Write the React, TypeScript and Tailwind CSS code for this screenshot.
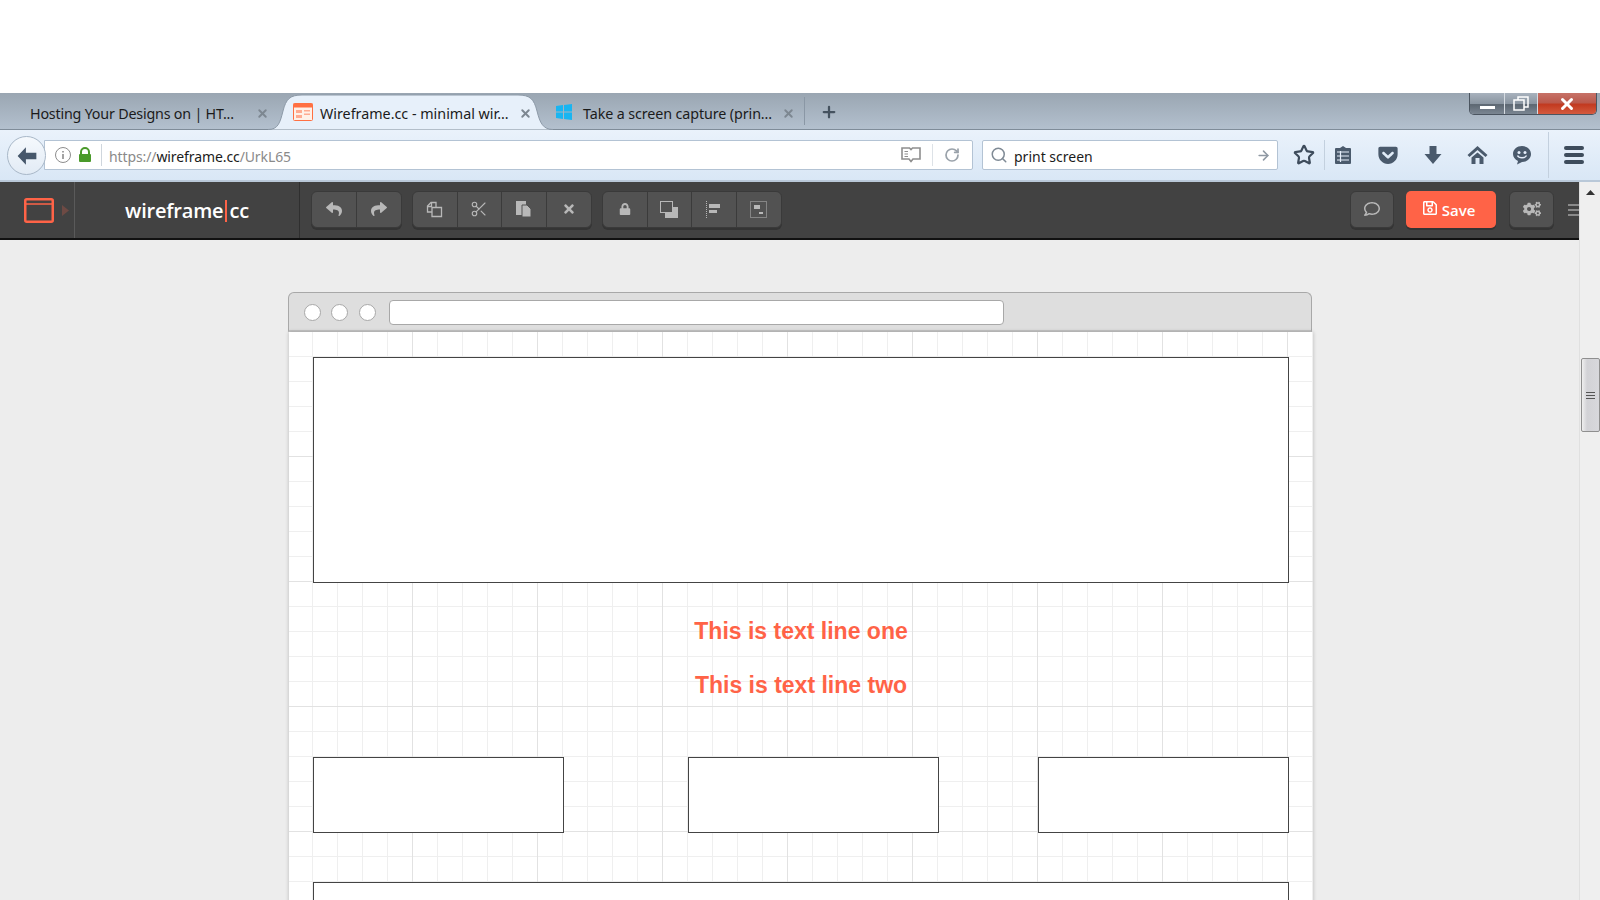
import React from "react";
import { FaReply, FaShare, FaTimes, FaLock, FaCogs, FaRegComment, FaRegSave, FaGetPocket } from "react-icons/fa";
import { Scissors, Star, RotateCw, ArrowRight, Search, Plus, X } from "lucide-react";

const Sep = ({ className = "" }: { className?: string }) => <div className={`w-px h-[30px] bg-[#c3d0de] ${className}`} />;

const TabX = () => <X size={13} strokeWidth={3.5} className="text-[#7d8791]" />;

function Tab({ title, icon, active, className, textClass }: { title: string; icon?: React.ReactNode; active?: boolean; className: string; textClass: string }) {
  return (
    <div className={`relative flex items-center h-full shrink-0 ${active ? "z-10" : ""} ${className}`}>
      {active && (
        <svg className="absolute -left-[13px] -right-[7px] top-0 -bottom-px w-[285px] h-[37px]" viewBox="0 0 285 37" preserveAspectRatio="none">
          <path d="M0 36.5 C10 36.5 12 30 15 18 C18 6 22 2 34 2 L250 2 C262 2 266 6 269 18 C272 30 275 36.5 285 36.5" fill="#e7f0fa" stroke="#8d9aa8" strokeWidth="1" />
        </svg>
      )}
      <div className="relative flex items-center w-full pt-[3px]">
        {icon}
        <span className={`text-[14.3px] pt-[4px] text-[#1b1b1b] whitespace-nowrap leading-none ${textClass}`}>{title}</span>
      </div>
    </div>
  );
}

function Btn({ children, last }: { children: React.ReactNode; last?: boolean }) {
  return <div className={`w-[44.5px] h-full flex items-center justify-center text-[#b8b8b8] ${last ? "" : "border-r border-[#3b3b3b]"}`}>{children}</div>;
}

function Group({ children, className = "" }: { children: React.ReactNode; className?: string }) {
  return <div className={`flex h-[37px] -mt-[2px] rounded-[6px] bg-[#525252] border border-[#3a3a3a] shadow-[0_2px_0_#343434] ${className}`}>{children}</div>;
}

function Box({ className }: { className: string }) {
  return <div className={`border border-[#444444] bg-white shrink-0 ${className}`} />;
}

export default function App() {
  return (
    <div className="w-[1600px] h-[900px] overflow-hidden flex flex-col bg-white font-['Noto_Sans','Open_Sans',sans-serif]">
      <div className="h-[93px] shrink-0 bg-white" />

      {/* tab strip */}
      <div className="relative h-[37px] shrink-0 flex items-center bg-[linear-gradient(180deg,#9aa6b2,#b3c0ce)] border-b border-[#7f8c99]">
        <Tab title="Hosting Your Designs on | HT..." textClass="tracking-[-0.2px]" className="w-[281px] pl-[30px]" />
        <div className="absolute left-[256px] top-[14px]"><TabX /></div>
        <Tab
          active
          title="Wireframe.cc - minimal wir..."
          textClass=""
          className="w-[265px] pl-[12px]"
          icon={
            <svg width="20" height="18" viewBox="0 0 20 18" className="mr-[7px] shrink-0">
              <rect x="0.5" y="0.5" width="19" height="17" rx="1" fill="#fff1e8" stroke="#ff7043" />
              <rect x="0.5" y="0.5" width="19" height="4" fill="#ff7043" />
              <rect x="3" y="7" width="6" height="3" fill="#ffab91" />
              <rect x="3" y="12" width="6" height="3" fill="#ffab91" />
              <rect x="11" y="7" width="6" height="1.5" fill="#ffab91" />
              <rect x="11" y="10.5" width="6" height="1.5" fill="#ffab91" />
            </svg>
          }
        />
        <div className="absolute left-[519px] top-[14px] z-10"><TabX /></div>
        <Tab
          title="Take a screen capture (prin..."
          textClass="tracking-[-0.1px]"
          className="w-[258px] pl-[10px]"
          icon={
            <svg width="16" height="16" viewBox="0 0 16 16" className="mr-[11px] shrink-0">
              <path d="M0 2 L7 1 V7.5 H0 Z M8 1 L16 0 V7.5 H8 Z M0 8.5 H7 V15 L0 14 Z M8 8.5 H16 V16 L8 15 Z" fill="#19b5f1" />
            </svg>
          }
        />
        <div className="absolute left-[782px] top-[14px]"><TabX /></div>
        <div className="w-px h-[28px] bg-[#8a97a5]" />
        <Plus size={18} strokeWidth={3} className="ml-[15px] mt-[2px] text-[#45525f]" />
        <div className="absolute right-[3px] top-0 h-[22px] w-[128px] flex rounded-b-[5px] border border-t-0 border-[#4b5560] overflow-hidden">
          <div className="w-[35px] flex items-center justify-center bg-[linear-gradient(180deg,#a8b2bd_0%,#8b96a2_50%,#5d6772_55%,#7b8692_100%)] border-r border-[#d5dbe1]">
            <div className="w-[15px] h-[3px] bg-white mt-[8px]" />
          </div>
          <div className="w-[33px] flex items-center justify-center bg-[linear-gradient(180deg,#a8b2bd_0%,#8b96a2_50%,#5d6772_55%,#7b8692_100%)] border-r border-[#d5dbe1]">
            <svg width="16" height="15" viewBox="0 0 16 15" fill="none" stroke="#fff" strokeWidth="1.5">
              <rect x="1" y="4" width="10" height="10" />
              <path d="M5 4 V1 H15 V11 H11" />
            </svg>
          </div>
          <div className="flex-1 flex items-center justify-center bg-[linear-gradient(180deg,#c77268_0%,#bb5a4d_45%,#c23a20_55%,#d45a3e_100%)]">
            <X size={18} strokeWidth={4} className="text-white" />
          </div>
        </div>
      </div>

      {/* navigation bar */}
      <div className="relative h-[52px] shrink-0 flex items-center bg-[linear-gradient(180deg,#eaf2fb,#d9e7f6)] border-b-2 border-[#b9c8d8] pl-[44px] pr-[12px]">
        <div className="absolute left-[7px] top-[6px] w-[39px] h-[39px] rounded-full bg-[linear-gradient(180deg,#f5f9fd,#e2ebf5)] border border-[#a9b8c8] flex items-center justify-center z-10">
          <svg width="22" height="22" viewBox="0 0 20 20"><path d="M9 2 L1.5 10 L9 18 L9 13 H18.5 V7 H9 Z" fill="#46576b" /></svg>
        </div>
        <div className="w-[929px] h-[30px] bg-white border border-[#b3c3d4] rounded-r-[2px] flex items-center text-[14px] pr-[10px]">
          <svg width="18" height="18" viewBox="0 0 18 18" className="ml-[9px] shrink-0" fill="none" stroke="#8d8d8d">
            <circle cx="9" cy="9" r="7.5" />
            <path d="M9 8 V13 M9 5 V6.5" strokeWidth="1.6" />
          </svg>
          <svg width="14" height="16" viewBox="0 0 14 16" className="ml-[6px] shrink-0">
            <path d="M3 7 V5 a4 4 0 0 1 8 0 V7" fill="none" stroke="#4a9a2a" strokeWidth="2" />
            <rect x="1" y="7" width="12" height="8" rx="1" fill="#4a9a2a" />
          </svg>
          <div className="w-px h-[22px] bg-[#cfd6dd] ml-[9px]" />
          <span className="ml-[7px] pt-[2px] text-[#8a8a8a] whitespace-nowrap tracking-[-0.1px]">https://<span className="text-[#1b1b1b]">wireframe.cc</span>/UrkL65</span>
          <svg width="20" height="18" viewBox="0 0 20 18" className="ml-auto mr-[11px]" fill="#fff" stroke="#8e8e8e" strokeWidth="1.6">
            <path d="M1 2 H8.5 L10 3.5 L11.5 2 H19 V13 H12 L10 15.5 L8 13 H1 Z" />
            <path d="M3.5 5.5 H7 M3.5 8 H7 M3.5 10.5 H7" strokeWidth="1.2" />
          </svg>
          <div className="w-px h-[22px] bg-[#dde2e7]" />
          <RotateCw size={16} strokeWidth={2.6} className="ml-[11px] mr-[2px] text-[#9aa2aa]" />
        </div>
        <div className="ml-[9px] w-[296px] h-[30px] bg-white border border-[#b3c3d4] rounded-[2px] flex items-center text-[14px] pr-[6px]">
          <Search size={18} strokeWidth={2} className="ml-[7px] mr-[6px] text-[#7f8a95]" />
          <span className="pt-[2px] text-[#1b1b1b]">print screen</span>
          <ArrowRight size={15} strokeWidth={2.5} className="ml-auto text-[#8f99a3]" />
        </div>
        <Star size={22} strokeWidth={2.4} className="ml-[15px] text-[#3e4c5c] shrink-0" />
        <Sep className="ml-[9px] h-[20px]" />
        <svg width="18" height="20" viewBox="0 0 18 20" className="ml-[9px] shrink-0">
          <path d="M6 3 L9 1 L12 3 H16 a1 1 0 0 1 1 1 V18 a1 1 0 0 1 -1 1 H2 a1 1 0 0 1 -1 -1 V4 a1 1 0 0 1 1 -1 Z" fill="#4a5a6c" />
          <path d="M3 7 H15 M3 11 H15 M3 15 H15 M6.5 6 V17" stroke="#e5eefa" strokeWidth="1.2" />
        </svg>
        <FaGetPocket size={22} className="ml-[25px] text-[#4a5a6c] shrink-0" />
        <svg width="18" height="20" viewBox="0 0 18 20" className="ml-[25px] shrink-0"><path d="M5.5 1 H12.5 V9 H17.5 L9 19 L0.5 9 H5.5 Z" fill="#4a5a6c" /></svg>
        <svg width="21" height="20" viewBox="0 0 20 20" className="ml-[25px] shrink-0" fill="#4a5a6c">
          <path d="M10 1 L20 10 L18 12 L10 5 L2 12 L0 10 Z" />
          <path d="M4 12.5 L10 7.5 L16 12.5 V19 H12 V13 H8 V19 H4 Z" />
        </svg>
        <svg width="20" height="20" viewBox="0 0 20 20" className="ml-[24px] shrink-0">
          <path d="M10 1 C15 1 19 4.5 19 9 C19 13.5 15 17 10 17 L5 19.5 L6 16 C3 14.5 1 12 1 9 C1 4.5 5 1 10 1 Z" fill="#4a5a6c" />
          <circle cx="7" cy="7.5" r="1.5" fill="#e5eefa" /><circle cx="13" cy="7.5" r="1.5" fill="#e5eefa" />
          <path d="M5.5 10.5 C7 13.5 13 13.5 14.5 10.5" fill="none" stroke="#e5eefa" strokeWidth="1.5" />
        </svg>
        <Sep className="ml-[16px] h-[46px]" />
        <div className="ml-[15px] w-[20px] flex flex-col gap-[3px] shrink-0">
          <div className="h-[4px] rounded-full bg-[#3e4c5c]" />
          <div className="h-[4px] rounded-full bg-[#3e4c5c]" />
          <div className="h-[4px] rounded-full bg-[#3e4c5c]" />
        </div>
      </div>

      {/* page + scrollbar */}
      <div className="flex-1 flex min-h-0">
        <div className="flex-1 min-w-0 flex flex-col bg-[#ededed] overflow-hidden">
          {/* app toolbar */}
          <div className="h-[58px] shrink-0 flex items-center bg-[#424242] border-b-2 border-[#111111] overflow-hidden">
            <div className="w-[75px] h-full flex items-center border-r border-[#5a5a5a] shrink-0">
              <svg width="30" height="25" viewBox="0 0 30 25" fill="none" className="ml-[24px]">
                <rect x="1.25" y="1.25" width="27.5" height="22.5" rx="1.5" stroke="#ff6347" strokeWidth="2.5" />
                <path d="M1 6 H29" stroke="#ff6347" strokeWidth="1.5" />
              </svg>
              <svg width="7" height="11" viewBox="0 0 7 11" className="ml-[8px]"><path d="M0 0 L7 5.5 L0 11 Z" fill="#6e4a44" /></svg>
            </div>
            <div className="w-[225px] h-full flex items-center justify-center border-r border-[#2f2f2f] shrink-0">
              <span className="flex items-center font-['Open_Sans',sans-serif] font-semibold text-[20px] text-white leading-none tracking-[-0.2px] pt-[2px]">wireframe<span className="inline-block w-[2px] h-[22px] bg-[#ff6347] mx-[2px]" />cc</span>
            </div>
            <Group className="ml-[11px]">
              <Btn><FaReply size={16} /></Btn>
              <Btn last><FaShare size={16} /></Btn>
            </Group>
            <Group className="ml-[10px]">
              <Btn>
                <svg width="17" height="17" viewBox="0 0 17 17" fill="none" stroke="#b8b8b8" strokeWidth="1.3">
                  <path d="M6 11 H1.5 V5 L5 1.5 H10 V6" /><path d="M6 6.5 H15.5 V15.5 H6 Z" />
                  <path d="M2 5.5 H5.5 V2" />
                </svg>
              </Btn>
              <Btn><Scissors size={18} strokeWidth={1.5} /></Btn>
              <Btn>
                <svg width="17" height="18" viewBox="0 0 17 18" fill="#b8b8b8">
                  <rect x="1" y="1" width="10" height="14" />
                  <path d="M7 5 H12 L16 9 V17 H7 Z" stroke="#525252" strokeWidth="1" />
                </svg>
              </Btn>
              <Btn last><FaTimes size={14} /></Btn>
            </Group>
            <Group className="ml-[10px]">
              <Btn><FaLock size={12} /></Btn>
              <Btn>
                <svg width="18" height="17" viewBox="0 0 18 17">
                  <path d="M5 6 H18 V17 H5 Z" fill="#b8b8b8" />
                  <rect x="0.5" y="0.5" width="12" height="11" fill="#525252" stroke="#b8b8b8" />
                </svg>
              </Btn>
              <Btn>
                <svg width="16" height="17" viewBox="0 0 16 17" fill="#b8b8b8">
                  <path d="M0.5 0 V17" stroke="#b8b8b8" strokeDasharray="1 1" />
                  <rect x="3" y="3" width="11" height="4" /><rect x="3" y="9" width="8" height="3" />
                </svg>
              </Btn>
              <Btn last>
                <svg width="17" height="17" viewBox="0 0 17 17" fill="#b8b8b8">
                  <rect x="0.5" y="0.5" width="16" height="16" fill="none" stroke="#b8b8b8" strokeDasharray="1 1" />
                  <rect x="4" y="4" width="6" height="4" /><rect x="9" y="11" width="4" height="2" />
                </svg>
              </Btn>
            </Group>
            <div className="ml-auto flex items-center shrink-0 w-[229px]">
              <Group className="w-[44px] justify-center items-center bg-[#494949] text-[#b8b8b8]"><FaRegComment size={16} /></Group>
              <div className="ml-[12px] -mt-[2px] w-[91px] h-[37px] rounded-[5px] bg-[#ff6347] shadow-[0_2px_0_#343434] flex items-center justify-center text-white text-[15px] font-semibold font-['Open_Sans',sans-serif]">
                <FaRegSave size={16} className="mr-[4px] -mt-[3px] -ml-[5px]" /><span className="pt-[2px]">Save</span>
              </div>
              <Group className="ml-[13px] w-[45px] justify-center items-center bg-[#494949] text-[#b8b8b8]"><FaCogs size={18} /></Group>
              <div className="ml-[14px] w-[11px] shrink-0 flex flex-col gap-[3px]">
                <div className="h-[2px] bg-[#8a8a8a]" /><div className="h-[2px] bg-[#8a8a8a]" /><div className="h-[2px] bg-[#8a8a8a]" />
              </div>
            </div>
          </div>

          {/* wireframe document */}
          <div className="flex-1 min-h-0 pl-[289px] pt-[52px]">
            <div className="-ml-px w-[1024px] h-[40px] pt-[2px] flex items-center rounded-t-[6px] bg-[#dedede] border border-b-2 border-[#a8a8a8] border-b-[#c4c4c4]">
              <div className="ml-[15px] w-[17px] h-[17px] rounded-full bg-white border border-[#a8a8a8]" />
              <div className="ml-[10px] w-[17px] h-[17px] rounded-full bg-white border border-[#a8a8a8]" />
              <div className="ml-[11px] w-[17px] h-[17px] rounded-full bg-white border border-[#a8a8a8]" />
              <div className="ml-[13px] w-[615px] h-[25px] rounded-[4px] bg-white border border-[#a8a8a8]" />
            </div>
            <div className="w-[1024px] h-[700px] pl-[24px] pt-[25px] bg-white shadow-[0_0_4px_rgba(0,0,0,0.22)] [background-image:linear-gradient(to_right,transparent_124px,#e2e2e2_124px),linear-gradient(to_bottom,transparent_124px,#e2e2e2_124px),linear-gradient(to_right,transparent_24px,#efefef_24px),linear-gradient(to_bottom,transparent_24px,#efefef_24px)] [background-size:125px_125px,125px_125px,25px_25px,25px_25px] [background-position:-1px_0,0_0,-1px_0,0_0]">
              <div className="w-[976px]">
                <Box className="w-[976px] h-[226px]" />
                <div className="h-[174px] pt-[34px] flex flex-col items-center font-['Liberation_Sans',sans-serif] font-bold text-[23px] text-[#ff6347] leading-[28px]">
                  <div>This is text line one</div>
                  <div className="mt-[26px]">This is text line two</div>
                </div>
                <div className="flex">
                  <Box className="w-[251px] h-[76px]" />
                  <Box className="ml-[124px] w-[251px] h-[76px]" />
                  <Box className="ml-[99px] w-[251px] h-[76px]" />
                </div>
                <Box className="mt-[49px] w-[976px] h-[200px]" />
              </div>
            </div>
          </div>
        </div>

        {/* scrollbar */}
        <div className="relative w-[21px] shrink-0 bg-[#efefef] border-l border-[#e0e0e0] flex flex-col items-center">
          <svg width="9" height="5" viewBox="0 0 9 5" className="mt-[8px]"><path d="M0 5 L4.5 0 L9 5 Z" fill="#333" /></svg>
          <div className="mt-[163px] w-[19px] h-[74px] rounded-[2px] border border-[#8f8f8f] bg-[linear-gradient(90deg,#efefef,#d2d2d6_30%,#d8d8dc)] flex flex-col items-center justify-center gap-[2px]">
            <div className="w-[9px] h-px bg-[#555]" /><div className="w-[9px] h-px bg-[#555]" /><div className="w-[9px] h-px bg-[#555]" />
          </div>
        </div>
      </div>
    </div>
  );
}
